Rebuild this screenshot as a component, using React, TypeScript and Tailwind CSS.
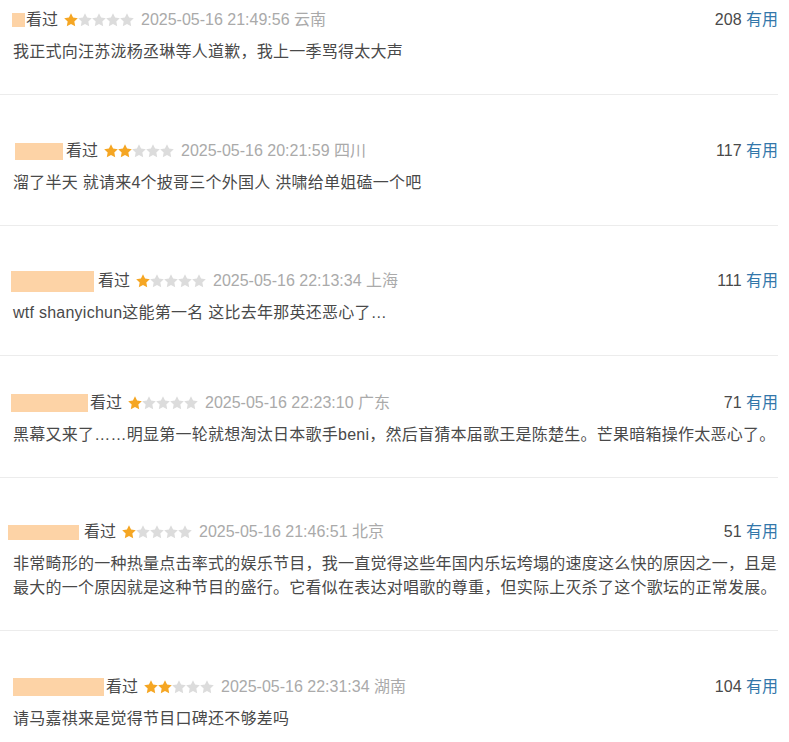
import React from "react";

type Review = {
    block: string;
    gap: string;
    top: string;
    rating: number;
    time: string;
    place: string;
    votes: number;
    text: string;
};

const reviews: Review[] = [
    {
        block: "ml-[-1px] w-[13px] h-[14px]",
        gap: "ml-px",
        top: "pt-[10px]",
        rating: 1,
        time: "2025-05-16 21:49:56",
        place: "云南",
        votes: 208,
        text: "我正式向汪苏泷杨丞琳等人道歉，我上一季骂得太大声",
    },
    {
        block: "ml-[2px] w-[48px] h-[17px]",
        gap: "ml-[3px]",
        top: "pt-[46px]",
        rating: 2,
        time: "2025-05-16 20:21:59",
        place: "四川",
        votes: 117,
        text: "溜了半天 就请来4个披哥三个外国人 洪啸给单姐磕一个吧",
    },
    {
        block: "ml-[-2px] w-[83px] h-[21px]",
        gap: "ml-[4px]",
        top: "pt-[45px]",
        rating: 1,
        time: "2025-05-16 22:13:34",
        place: "上海",
        votes: 111,
        text: "wtf shanyichun这能第一名 这比去年那英还恶心了…",
    },
    {
        block: "ml-[-2px] w-[77px] h-[18px]",
        gap: "ml-[2px]",
        top: "pt-[37px]",
        rating: 1,
        time: "2025-05-16 22:23:10",
        place: "广东",
        votes: 71,
        text: "黑幕又来了……明显第一轮就想淘汰日本歌手beni，然后盲猜本届歌王是陈楚生。芒果暗箱操作太恶心了。",
    },
    {
        block: "ml-[-5px] w-[71px] h-[15px]",
        gap: "ml-[5px]",
        top: "pt-[44px]",
        rating: 1,
        time: "2025-05-16 21:46:51",
        place: "北京",
        votes: 51,
        text: "非常畸形的一种热量点击率式的娱乐节目，我一直觉得这些年国内乐坛垮塌的速度这么快的原因之一，且是最大的一个原因就是这种节目的盛行。它看似在表达对唱歌的尊重，但实际上灭杀了这个歌坛的正常发展。",
    },
    {
        block: "ml-0 w-[91px] h-[18px]",
        gap: "ml-[2px]",
        top: "pt-[46px]",
        rating: 2,
        time: "2025-05-16 22:31:34",
        place: "湖南",
        votes: 104,
        text: "请马嘉祺来是觉得节目口碑还不够差吗",
    },
];

const Star = ({ on }: { on: boolean }) => (
    <svg width="14" height="14" viewBox="1.5 1.5 21 21" className="shrink-0">
        <path
            d="M12 1.8l3.1 6.5 7.1 1-5.2 5 1.3 7.1L12 18l-6.3 3.4 1.3-7.1-5.2-5 7.1-1z"
            fill={on ? "#f5a623" : "#dcdcdc"}
        />
    </svg>
);

const App = () => {
    return (
        <div className="w-[789px] bg-white pr-[11px] font-['Liberation_Sans','Noto_Sans_CJK_SC',sans-serif]">
            {reviews.map((r, i) => (
                <div
                    key={i}
                    className={`${r.top} pb-[30px] ${i < reviews.length - 1 ? "border-b border-[#ececec]" : ""}`}
                >
                    <div className="pl-[13px]">
                        <div className="flex items-center h-5 text-[16px]">
                            <span className={`${r.block} bg-[#fdd3a6] shrink-0`} />
                            <span className={`${r.gap} text-[#494949]`}>看过</span>
                            <span className="ml-[6px] flex">
                                {[0, 1, 2, 3, 4].map((s) => (
                                    <Star key={s} on={s < r.rating} />
                                ))}
                            </span>
                            <span className="ml-[7px] text-[#aaaaaa]">
                                {r.time} {r.place}
                            </span>
                            <span className="ml-auto text-[#494949]">
                                {r.votes} <span className="text-[#3377aa]">有用</span>
                            </span>
                        </div>
                        <p className="mt-[10px] text-[16px] leading-6 tracking-[0.25px] text-[#494949]">
                            {r.text}
                        </p>
                    </div>
                </div>
            ))}
        </div>
    );
};

export default App;
